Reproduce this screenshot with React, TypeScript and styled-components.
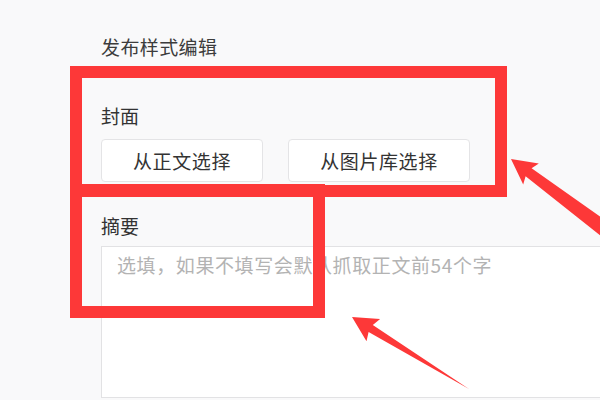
import React from 'react';
import styled, { createGlobalStyle } from 'styled-components';

const GlobalStyle = createGlobalStyle`
  html, body {
    margin: 0;
    padding: 0;
    background: #f9f9fa;
    overflow: hidden;
  }
  body {
    font-family: "Noto Sans CJK SC", "Noto Sans", sans-serif;
  }
`;

const App = () => {
  return (
    <Page>
      <GlobalStyle />
      <Form>
        <Title>发布样式编辑</Title>
        <Label style={{ marginTop: 41 }}>封面</Label>
        <ButtonRow>
          <PickButton width={162}>从正文选择</PickButton>
          <PickButton width={182}>从图片库选择</PickButton>
        </ButtonRow>
        <Label style={{ marginTop: 30 }}>摘要</Label>
        <Summary placeholder="选填，如果不填写会默认抓取正文前54个字" />
      </Form>

      <Mark left={70} top={66} width={437} height={131} />
      <Mark left={70} top={184} width={255} height={134} />
      <Arrows width="600" height="400" viewBox="0 0 600 400">
        <polygon points="511,159 538.8,163.6 531.6,168.2 619.8,230.6 610.2,243.4 525.6,176.2 523.2,184.4" />
        <polygon points="352,317 380.1,319 372.8,325.1 469,389 368.6,331.9 366.5,341.2" />
      </Arrows>
    </Page>
  );
};

const Page = styled.div`
  position: relative;
  width: 600px;
  height: 400px;
  overflow: hidden;
`;

const Form = styled.div`
  display: flex;
  flex-direction: column;
  align-items: flex-start;
  padding: 33px 0 0 101px;
`;

const Title = styled.div`
  font-size: 19px;
  line-height: 28px;
  letter-spacing: 0.4px;
  color: #3c3c3c;
`;

const Label = styled.div`
  font-size: 19px;
  line-height: 28px;
  color: #333;
`;

const ButtonRow = styled.div`
  display: flex;
  gap: 25px;
  margin-top: 9px;
`;

const PickButton = styled.button<{ width: number }>`
  width: ${p => p.width}px;
  height: 43px;
  padding: 0;
  background: #fff;
  border: 1px solid #e4e4e6;
  border-radius: 4px;
  font-family: "Noto Sans CJK SC", sans-serif;
  font-size: 19px;
  letter-spacing: 0.6px;
  color: #333;
`;

const Summary = styled.textarea`
  margin-top: 6px;
  width: 540px;
  height: 152px;
  box-sizing: border-box;
  padding: 4px 15px;
  background: #fff;
  border: 1px solid #e2e2e4;
  border-radius: 0;
  resize: none;
  font-family: "Noto Sans CJK SC", sans-serif;
  font-size: 19px;
  line-height: 28px;
  letter-spacing: 0.6px;
  &::placeholder {
    color: #b3b3b3;
  }
`;

const Mark = styled.div<{ left: number; top: number; width: number; height: number }>`
  position: absolute;
  left: ${p => p.left}px;
  top: ${p => p.top}px;
  width: ${p => p.width}px;
  height: ${p => p.height}px;
  box-sizing: border-box;
  border: 12px solid #fd3838;
`;

const Arrows = styled.svg`
  position: absolute;
  left: 0;
  top: 0;
  fill: #fd3838;
`;

export default App;
